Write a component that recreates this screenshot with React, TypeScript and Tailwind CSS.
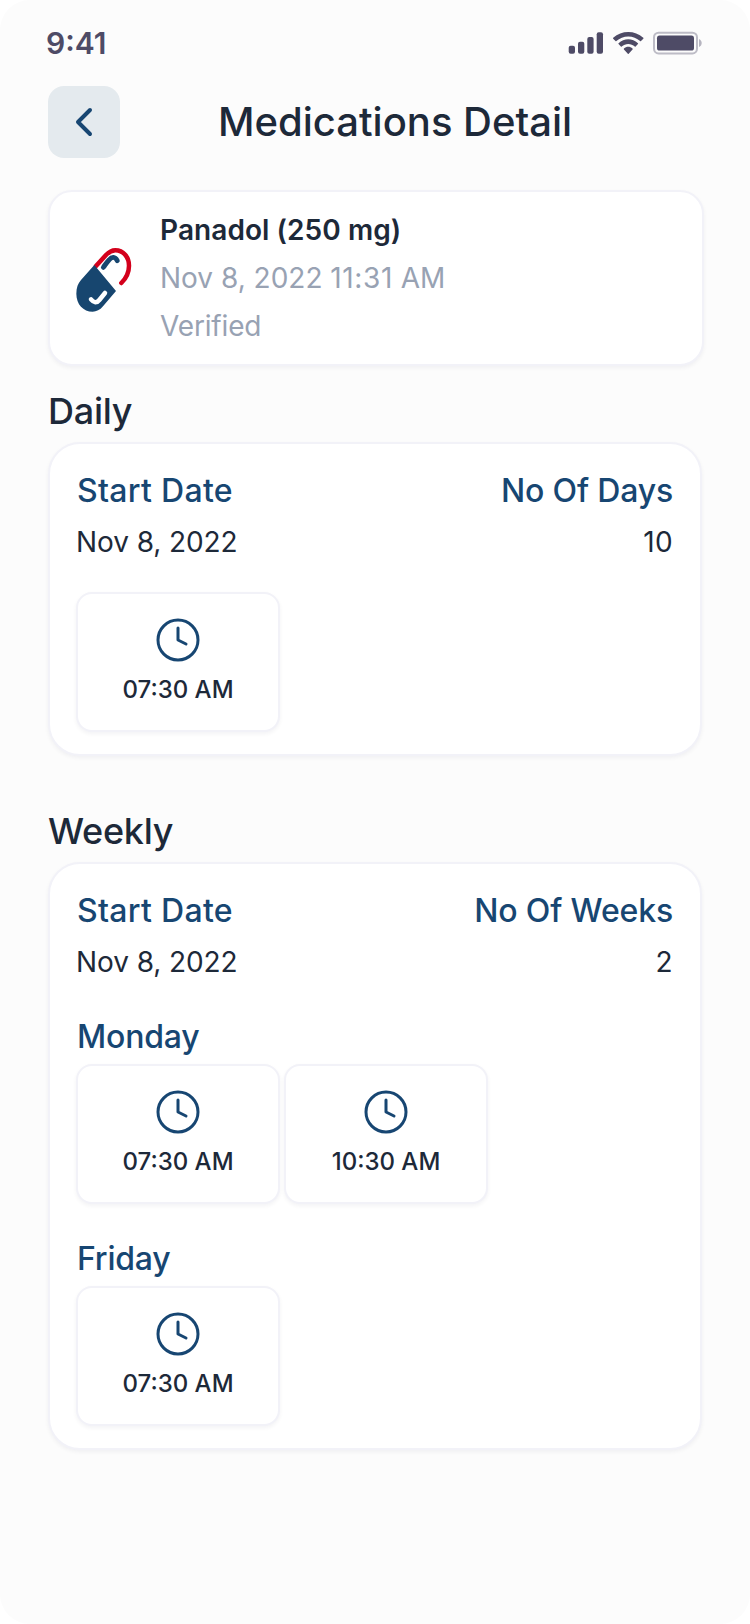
import { Clock } from "lucide-react";

function StatusBar() {
  return (
    <div className="flex h-[86px] items-center justify-between pr-[48px] pl-[46px] text-[#4e4b66]">
      <span className="text-[30px] leading-9 font-semibold">9:41</span>
      <div className="flex items-center">
        <svg width="36" height="22" viewBox="0 0 36 22" fill="currentColor">
          <rect x="0.7" y="13.7" width="6.3" height="8.1" rx="2" />
          <rect x="10" y="9.7" width="6.3" height="12.1" rx="2" />
          <rect x="19.3" y="5" width="6.3" height="16.8" rx="2" />
          <rect x="28.7" y="0.3" width="6.3" height="21.5" rx="2" />
        </svg>
        <svg className="ml-[9px]" width="30.5" height="22" viewBox="0 0 17.142 12.33" fill="currentColor">
          <path d="M8.5713 2.46628C11.0584 2.46639 13.4504 3.38847 15.2529 5.04195C15.3887 5.16961 15.6056 5.168 15.7393 5.03834L17.0368 3.77487C17.1045 3.70911 17.1422 3.62004 17.1417 3.52735C17.1411 3.43467 17.1023 3.34603 17.0338 3.28104C12.3028 -1.09368 4.83907 -1.09368 0.108056 3.28104C0.0395 3.34598 0.0006 3.4346 0 3.52728C-0.0006 3.61996 0.037 3.70906 0.1047 3.77487L1.40255 5.03834C1.53615 5.16819 1.75327 5.1698 1.88893 5.04195C3.69167 3.38836 6.08395 2.46628 8.5713 2.46628Z" />
          <path d="M8.56795 6.68656C9.92527 6.68647 11.2341 7.19821 12.2403 8.12234C12.3763 8.25347 12.5907 8.25063 12.7234 8.11594L14.0106 6.79678C14.0784 6.72761 14.116 6.63376 14.115 6.53623C14.1141 6.43869 14.0748 6.3456 14.0057 6.27779C10.944 3.38797 6.19448 3.38797 3.13278 6.27779C3.06363 6.3456 3.02429 6.43873 3.0235 6.5363C3.02271 6.63386 3.06054 6.72767 3.1285 6.79678L4.41533 8.11594C4.54797 8.25063 4.76239 8.25347 4.89843 8.12234C5.9039 7.19883 7.21167 6.68713 8.56795 6.68656Z" />
          <path d="M11.0924 9.48011C11.0943 9.58546 11.0572 9.68703 10.9899 9.76084L8.81327 12.2156C8.74946 12.2877 8.66247 12.3283 8.5717 12.3283C8.48093 12.3283 8.39394 12.2877 8.33013 12.2156L6.15314 9.76084C6.08585 9.68697 6.04886 9.58537 6.05089 9.48002C6.05292 9.37467 6.09379 9.27503 6.16384 9.20458C7.554 7.98 9.5894 7.98 10.9796 9.20458C11.0496 9.27509 11.0904 9.37476 11.0924 9.48011Z" />
        </svg>
        <svg className="ml-[9.5px]" width="49" height="24" viewBox="0 0 49 24">
          <rect x="1" y="1.7" width="43" height="20.7" rx="4.6" fill="none" stroke="#4e4b66" strokeOpacity="0.36" strokeWidth="2" />
          <rect x="4" y="4.6" width="37" height="15" rx="2.6" fill="currentColor" />
          <path d="M46 7.9v8c1.7-.7 2.7-2.300 2.700-4s-1-3.300-2.700-4z" fill="currentColor" fillOpacity="0.4" />
        </svg>
      </div>
    </div>
  );
}

function Header() {
  return (
    <header className="flex h-[72px] items-center px-[48px]">
      <button className="flex size-[72px] items-center justify-center rounded-2xl bg-[#e4eaee]" aria-label="Back">
        <svg width="20" height="32" viewBox="0 0 20 32" fill="none" stroke="#174672" strokeWidth="4" strokeLinecap="round" strokeLinejoin="round">
          <path d="M16 4 4 16l12 12" />
        </svg>
      </button>
      <h1 className="ml-[98px] text-[40px] leading-[48px] font-medium whitespace-nowrap">Medications Detail</h1>
    </header>
  );
}

function PillIcon() {
  return (
    <svg className="mt-1 shrink-0" width="56" height="66" viewBox="138 201 168 198" fill="none" strokeLinecap="round" strokeLinejoin="round">
      <path d="M198 258 228 225C239 213 248 210.500 256 210.500C280 210.500 297 231 297 257C297 280 289 294 274 309" stroke="#d3001b" strokeWidth="13.500" />
      <path d="M193 255 258 333 219 379C210 390 199 395 188 395C160 395 139 373 139 341C139 323 144 310 153 300Z" fill="#17466f" />
      <path d="M220 262C226 254 230 247 237 240C246 229 255 230 262 242" stroke="#17466f" strokeWidth="14.500" />
      <path d="M183 358C192 369 200 370 208 360L225 339" stroke="#fff" strokeWidth="13.500" />
    </svg>
  );
}

function TimeTile({ time }: { time: string }) {
  return (
    <div className="flex h-[140px] w-[204px] flex-col items-center rounded-2xl border-2 border-[#f2f2f8] bg-white pt-[22px] shadow-[0_2px_4px_rgba(20,20,50,0.05)]">
      <Clock size={48} strokeWidth={1.5} className="text-[#174672]" />
      <span className="mt-[10px] text-2xl leading-8 font-medium">{time}</span>
    </div>
  );
}

function StartDate() {
  return (
    <div>
      <div className="pl-px text-[32px] leading-10 font-medium tracking-[0.3px] text-[#174672]">Start Date</div>
      <div className="mt-[13px] text-[28px] leading-9 tracking-[-0.08px]">Nov 8, 2022</div>
    </div>
  );
}

function Duration({ label, value }: { label: string; value: string }) {
  return (
    <div className="pr-px text-right">
      <div className="text-[32px] leading-10 font-medium tracking-[-0.16px] text-[#174672]">{label}</div>
      <div className="mt-[13px] text-[28px] leading-9 tracking-[0.4px]">{value}</div>
    </div>
  );
}

function DayTitle({ children }: { children: string }) {
  return <h3 className="pl-px text-[32px] leading-10 font-medium tracking-[-0.2px] text-[#174672]">{children}</h3>;
}

const card = "border-2 border-[#f2f2f8] bg-white shadow-[0_2px_4px_rgba(20,20,50,0.05)]";

export default function App() {
  return (
    <div className="bg-white">
      <main className="h-[1624px] overflow-hidden rounded-[30px] bg-[#fcfcfc] font-['Inter',sans-serif] text-[#1d2939]">
        <StatusBar />
        <Header />

        <section className={`mt-8 ml-[48px] flex h-[176px] w-[656px] items-center gap-7 rounded-3xl pl-[26px] ${card}`}>
          <PillIcon />
          <div className="text-[28px] leading-[48px] text-[#98a2b3]">
            <div className="font-semibold tracking-[0.07px] text-[#1d2939]">Panadol (250 mg)</div>
            <div>
              Nov 8, 2022 <span className="tracking-[0.6px]">11:31</span> AM
            </div>
            <div className="tracking-[-0.16px]">Verified</div>
          </div>
        </section>

        <h2 className="mt-[23px] ml-[48px] text-4xl leading-[44px] font-medium tracking-[-0.25px]">Daily</h2>
        <section className={`mt-[9px] ml-[48px] w-[654px] rounded-[32px] px-[26px] pt-[27px] pb-[22px] ${card}`}>
          <div className="flex justify-between">
            <StartDate />
            <Duration label="No Of Days" value="10" />
          </div>
          <div className="mt-8 flex gap-1">
            <TimeTile time="07:30 AM" />
          </div>
        </section>

        <h2 className="mt-[53px] ml-[48px] text-4xl leading-[44px] font-medium tracking-[-0.25px]">Weekly</h2>
        <section className={`mt-[9px] ml-[48px] w-[654px] rounded-[32px] px-[26px] pt-[27px] pb-[22px] ${card}`}>
          <div className="flex justify-between">
            <StartDate />
            <Duration label="No Of Weeks" value="2" />
          </div>
          <div className="mt-[37px]">
            <DayTitle>Monday</DayTitle>
            <div className="mt-[7px] flex gap-1">
              <TimeTile time="07:30 AM" />
              <TimeTile time="10:30 AM" />
            </div>
          </div>
          <div className="mt-[35px]">
            <DayTitle>Friday</DayTitle>
            <div className="mt-[7px] flex gap-1">
              <TimeTile time="07:30 AM" />
            </div>
          </div>
        </section>
      </main>
    </div>
  );
}
